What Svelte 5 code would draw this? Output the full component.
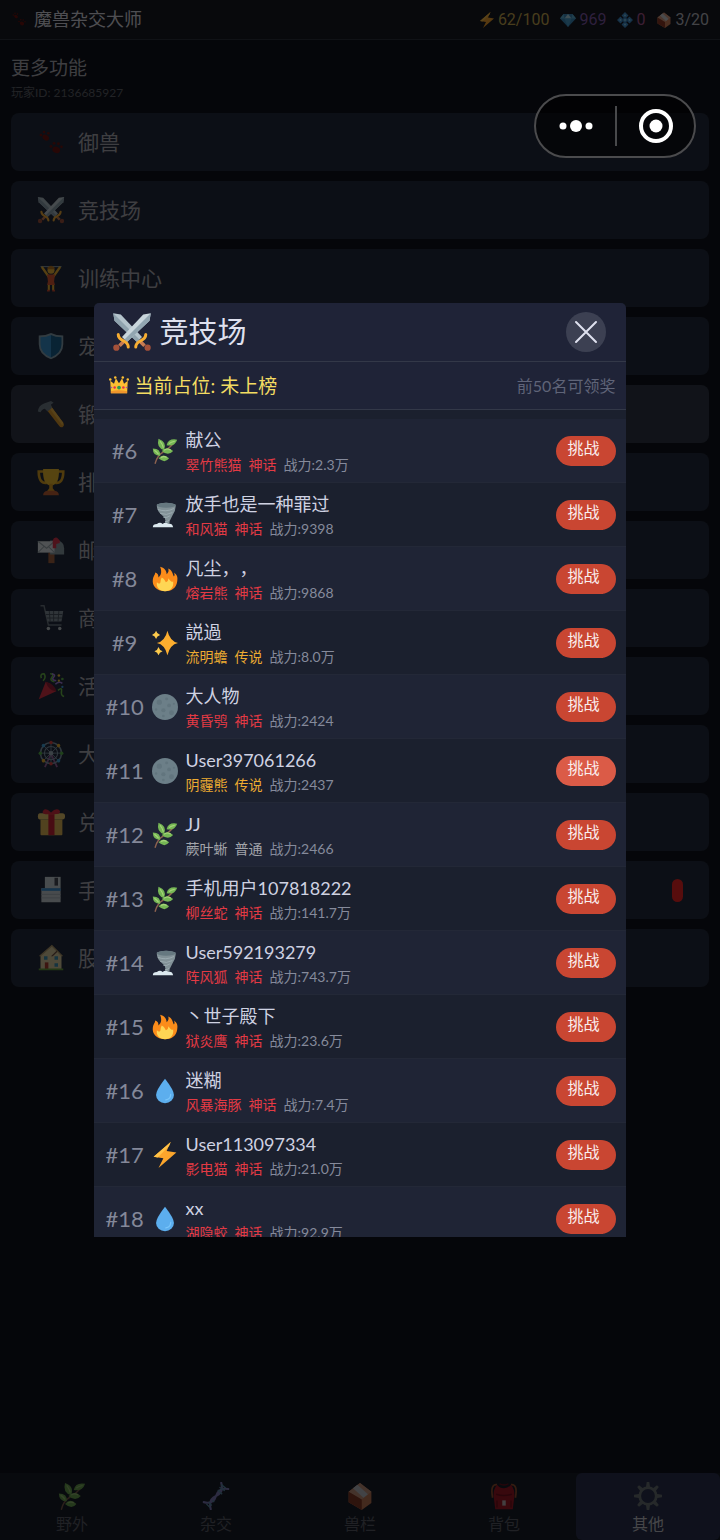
<script>
  const stats = [
    { icon: 'bolt', value: '62/100', tone: 'energy' },
    { icon: 'gem', value: '969', tone: 'gems' },
    { icon: 'bead', value: '0', tone: 'beads' },
    { icon: 'brick', value: '3/20', tone: 'slots' }
  ];

  const features = [
    { icon: 'paw', label: '御兽' },
    { icon: 'swords', label: '竞技场' },
    { icon: 'lifter', label: '训练中心' },
    { icon: 'shield', label: '宠物' },
    { icon: 'hammer', label: '锻造', raised: true },
    { icon: 'trophy', label: '排行' },
    { icon: 'mailbox', label: '邮件' },
    { icon: 'cart', label: '商店' },
    { icon: 'party', label: '活动' },
    { icon: 'wheel', label: '大转盘' },
    { icon: 'gift', label: '兑换' },
    { icon: 'floppy', label: '手动存档', alert: true },
    { icon: 'house', label: '股市' }
  ];

  const players = [
    { rank: 6, icon: 'leaf', name: '献公', pet: '翠竹熊猫', tier: '神话', power: '2.3万' },
    { rank: 7, icon: 'tornado', name: '放手也是一种罪过', pet: '和风猫', tier: '神话', power: '9398' },
    { rank: 8, icon: 'fire', name: '凡尘，，', pet: '熔岩熊', tier: '神话', power: '9868' },
    { rank: 9, icon: 'sparkle', name: '説過', pet: '流明蟾', tier: '传说', power: '8.0万' },
    { rank: 10, icon: 'moon', name: '大人物', pet: '黄昏鸮', tier: '神话', power: '2424' },
    { rank: 11, icon: 'moon', name: 'User397061266', pet: '阴霾熊', tier: '传说', power: '2437', hot: true },
    { rank: 12, icon: 'leaf', name: 'JJ', pet: '蕨叶蜥', tier: '普通', power: '2466' },
    { rank: 13, icon: 'leaf', name: '手机用户107818222', pet: '柳丝蛇', tier: '神话', power: '141.7万' },
    { rank: 14, icon: 'tornado', name: 'User592193279', pet: '阵风狐', tier: '神话', power: '743.7万' },
    { rank: 15, icon: 'fire', name: '丶世子殿下', pet: '狱炎鹰', tier: '神话', power: '23.6万' },
    { rank: 16, icon: 'drop', name: '迷糊', pet: '风暴海豚', tier: '神话', power: '7.4万' },
    { rank: 17, icon: 'bolt', name: 'User113097334', pet: '影电猫', tier: '神话', power: '21.0万' },
    { rank: 18, icon: 'drop', name: 'xx', pet: '湖隐蛟', tier: '神话', power: '92.9万' }
  ];

  const tierClass = { 神话: 'mythic', 传说: 'legend', 普通: 'common' };

  const tabs = [
    { icon: 'leaf', label: '野外' },
    { icon: 'dna', label: '杂交' },
    { icon: 'brick', label: '兽栏' },
    { icon: 'backpack', label: '背包' },
    { icon: 'gear', label: '其他', active: true }
  ];

  const spokes = [0, 45, 90, 135, 180, 225, 270, 315];
  const cabins = ['#e5433d', '#f0b32c', '#58b947', '#3fa7e0', '#e5433d', '#f0b32c', '#58b947', '#3fa7e0'];
</script>

{#snippet icon(name)}
  <svg class="icon" viewBox="0 0 32 32" aria-hidden="true">
    {#if name === 'paw'}
      <g fill="#6e100a">
        <ellipse cx="10" cy="11" rx="4" ry="3" transform="rotate(35 10 11)" />
        <circle cx="4.500" cy="8" r="1.500" /><circle cx="8" cy="4.500" r="1.500" /><circle cx="13" cy="6" r="1.500" />
        <ellipse cx="22" cy="25" rx="4.500" ry="3.500" transform="rotate(20 22 25)" />
        <circle cx="16" cy="21" r="1.600" /><circle cx="19.500" cy="17.500" r="1.600" /><circle cx="24.500" cy="18" r="1.600" /><circle cx="28" cy="21.500" r="1.500" />
      </g>
    {:else if name === 'swords'}
      <path d="M1 1l6 1 17 18-4 4L2 7z" fill="#b4c4cc" />
      <path d="M1 1l21 21-2 2L2 7z" fill="#8fa3ae" />
      <path d="M31 1l-6 1L8 20l4 4L30 7z" fill="#c9d6dc" />
      <path d="M31 1L10 22l2 2L30 7z" fill="#92a6b1" />
      <path d="M5 26l4-4 2 2-4 4zM27 26l-4-4-2 2 4 4z" fill="#c77b52" />
      <path d="M5 18q0 3 4 5t4 5M27 18q0 3-4 5t-4 5" fill="none" stroke="#f6ad32" stroke-width="2.400" stroke-linecap="round" />
      <circle cx="3.500" cy="28.500" r="2.500" fill="#a4513a" /><circle cx="28.500" cy="28.500" r="2.500" fill="#a4513a" />
    {:else if name === 'lifter'}
      <path d="M4 3h24" stroke="#90a4ae" stroke-width="1.200" />
      <path d="M6 4l7 10M26 4l-7 10" stroke="#f5b62e" stroke-width="2.600" stroke-linecap="round" />
      <circle cx="16" cy="7" r="4" fill="#f8bd35" />
      <path d="M12 4q4-4 8 0v2h-8z" fill="#c27a1c" />
      <path d="M11.500 12h9l-1 8 1 4h-9l1-4z" fill="#e0562e" />
      <path d="M13.500 24v6M18.500 24v6" stroke="#f5b62e" stroke-width="2.400" />
      <path d="M11.500 30.500h3M17.500 30.500h3" stroke="#d84a2a" stroke-width="2" />
    {:else if name === 'shield'}
      <path d="M2 4q8 0 14-3 6 3 14 3v10q0 12-14 17Q2 26 2 14z" fill="#8fa9b5" />
      <path d="M4 6q7 0 12-2.500V29Q4 24 4 14z" fill="#3793cf" />
      <path d="M28 6q-7 0-12-2.500V29q12-5 12-15z" fill="#176291" />
    {:else if name === 'hammer'}
      <path d="M11 11l5-4 14 19q2 3-1 5-2 1-4-2z" fill="#e29a24" />
      <path d="M14 9l2-2 14 19-1 3z" fill="#f7b940" />
      <path d="M1 13q1-7 7-9l8-3 3 2-3 2 1 4-5 4-3-3q-3 0-5 4z" fill="#73808a" />
    {:else if name === 'trophy'}
      <path d="M8 4H2q0 14 9 13M24 4h6q0 14-9 13" fill="none" stroke="#e6a91e" stroke-width="3" />
      <path d="M7 1h18q1 18-9 19Q6 19 7 1z" fill="#f6c12b" />
      <path d="M14 18h4v5l3 4H11l3-4z" fill="#e4a11f" />
      <path d="M7 31q0-4 5-5h8q5 1 5 5z" fill="#c7602f" />
    {:else if name === 'mailbox'}
      <path d="M13 19h7v12h-7z" fill="#a5623c" />
      <path d="M15 5h8q8 1 8 9v7H15z" fill="#8fa0a8" />
      <path d="M1 6h19v13H1z" fill="#e6eaec" />
      <path d="M1 6l10 8 9-8M1 19l7-7M20 19l-7-7" fill="none" stroke="#9fabb1" stroke-width="1.200" />
      <path d="M18 14V5q1-4 5-3l3 3v3l-4 1v5z" fill="#e0334a" />
    {:else if name === 'cart'}
      <path d="M4 2h4l5 22h15" fill="none" stroke="#6f7a82" stroke-width="1.600" />
      <path d="M9 8h21l-2 12H12z" fill="#87939b" />
      <path d="M10 12h19M11 16h18M14 8l1 12M19 8v12M25 8l-1 12" stroke="#414a55" stroke-width="1" />
      <circle cx="13" cy="28" r="2" fill="#c5cdd1" /><circle cx="26" cy="28" r="2" fill="#c5cdd1" />
    {:else if name === 'party'}
      <path d="M2 31l8-20q8 3 12 11z" fill="#e22f42" />
      <path d="M10 11q3 10 12 11-1-8-12-11z" fill="#9e1c32" />
      <path d="M5 7q-2-5 3-5 3 4-1 8M15 2q5 0 2 4t3 5M24 21q5-4 4 1t3 6" fill="none" stroke="#6bbf45" stroke-width="1.800" />
      <path d="M17 2q5 1 2 4t3 4M21 14q4-4 8-1" fill="none" stroke="#ab7fe4" stroke-width="1.800" />
      <circle cx="25" cy="4" r="1.500" fill="#f7c733" /><circle cx="29" cy="8" r="1.500" fill="#5eb745" /><circle cx="25" cy="10" r="1.300" fill="#f7c733" /><circle cx="29" cy="17" r="1.300" fill="#46a3e8" />
    {:else if name === 'wheel'}
      <path d="M16 16l-7 15M16 16l7 15" stroke="#9c5f9c" stroke-width="2" />
      <circle cx="16" cy="15" r="12" fill="none" stroke="#869cac" stroke-width="1.600" />
      <circle cx="16" cy="15" r="7.500" fill="none" stroke="#869cac" stroke-width="1.200" />
      {#each spokes as angle, i}
        <g transform="rotate({angle} 16 15)">
          <path d="M16 15V3" stroke="#869cac" stroke-width="1" />
          <circle cx="16" cy="2.800" r="2" fill={cabins[i]} />
        </g>
      {/each}
      <circle cx="16" cy="15" r="2.500" fill="#a7b8c2" />
    {:else if name === 'gift'}
      <path d="M4 13h25v17q0 1-1 1H5q-1 0-1-1z" fill="#e8bd54" />
      <path d="M3 6h26q3 0 3 3v1q0 3-3 3H3q-2 0-2-3V9q0-3 2-3z" fill="#f2cd6b" />
      <path d="M13 7h7v24h-7z" fill="#cf1f30" />
      <path d="M16 7Q4 8 7 3q3-4 9 2 6-6 10-2 2 5-10 4z" fill="#e0293b" />
    {:else if name === 'floppy'}
      <path d="M9 1h18v13H9z" fill="#cfd8dc" /><path d="M20 2h4v9h-4z" fill="#454b54" />
      <path d="M5 14h22v16H5z" fill="#cdd5da" /><path d="M5 14h22v3H5z" fill="#3b93d6" />
      <path d="M5 21h22M5 25h22" stroke="#a9b3b9" stroke-width="1" />
    {:else if name === 'house'}
      <path d="M4 13L17 2l11 11v16H4z" fill="#dfcf9e" />
      <path d="M3 14L17 2l12 12" fill="none" stroke="#b49b6a" stroke-width="1.600" />
      <path d="M16 14l7-7v2l-5 5z" fill="#6c4a3b" />
      <path d="M9 21h4v8H9z" fill="#b03a2b" />
      <path d="M8 14h4v4H8zM20 14h4v4h-4zM20 22h4v4h-4z" fill="#3e93b4" />
      <path d="M2 28h28v2H2z" fill="#669e39" />
    {:else if name === 'crown'}
      <path d="M2 9l6 5 3-9 5 8 5-8 3 9 6-5-1 20H3z" fill="#fdbf32" />
      <path d="M3 26q13-3 26 0v3H3z" fill="#f0952c" />
      <g fill="#fdbf32"><circle cx="2" cy="7" r="2" /><circle cx="10" cy="4" r="2" /><circle cx="22" cy="4" r="2" /><circle cx="30" cy="7" r="2" /></g>
      <circle cx="16" cy="20" r="3" fill="#2d9b4e" /><circle cx="9" cy="20" r="2" fill="#e0324c" /><circle cx="23" cy="20" r="2" fill="#e0324c" /><circle cx="4" cy="20" r="1.200" fill="#9255c5" /><circle cx="28" cy="20" r="1.200" fill="#9255c5" />
    {:else if name === 'leaf'}
      <path d="M4 31Q6 22 14 17T26 7" fill="none" stroke="#8d6250" stroke-width="1.800" stroke-linecap="round" />
      <g fill="#76b755">
        <path d="M31 2Q20 0 18 9q10 2 13-7z" /><path d="M8 1q11 4 7 14Q5 12 8 1z" />
        <path d="M1 13q10 0 9 9-9 0-9-9z" /><path d="M12 16q7-7 14 0-6 7-14 0z" />
        <path d="M8 25q6-7 13 0-5 7-13 0z" />
      </g>
      <g fill="none" stroke="#a9d67c" stroke-width="1.400"><path d="M28 4q-5 1-7 3M10 4q3 4 4 8M15 15q4-3 8 0M11 24q4-2 7 0M3 15q3 2 5 5" /></g>
    {:else if name === 'tornado'}
      <path d="M6 3q11-4 23 0 1 7-4 14-4 6-4 12h-6q4-8-2-12Q5 11 6 3z" fill="#829197" />
      <ellipse cx="17.500" cy="4" rx="11.500" ry="3" fill="#667880" />
      <path d="M7 9q10 4 20-1M10 14q8 3 15-1M14 19q4 1 8-2M16 24q3 1 5-2" fill="none" stroke="#a0afb5" stroke-width="1" />
      <path d="M1 31q0-4 5-4 4-3 7 0 4-3 7 0 5-1 6 4z" fill="#dce9ef" />
    {:else if name === 'fire'}
      <path d="M16 31C5 31 0 24 1 17c0-4 3-6 3-9 3 1 4 3 4 6 4-3 4-8 2-13 5 1 8 5 8 9 2-2 3-4 2-7 5 2 5 6 7 10 1-1 1-3 0-5 4 3 5 6 4 11-1 8-7 12-15 12z" fill="#fb8c1a" />
      <path d="M16 31C9 31 5 26 6 20c2 2 3 2 4 1 1-2 0-4 2-7 3 1 4 4 5 6 3-1 3-3 3-5 3 3 3 5 6 4 1 7-3 12-10 12z" fill="#fed654" />
    {:else if name === 'sparkle'}
      <path d="M19 1q3 13 13 15-10 2-13 15Q16 18 6 16q10-2 13-15z" fill="#fdae2f" />
      <path d="M5 1q1 4 5 5-4 1-5 5-1-4-5-5 4-1 5-5zM8 21q1 4 5 5-4 1-5 5-1-4-5-5 4-1 5-5z" fill="#fdca4c" />
    {:else if name === 'moon'}
      <circle cx="16" cy="16" r="16" fill="#6c7f88" />
      <g fill="#62757e"><circle cx="9" cy="10" r="3.200" /><circle cx="18" cy="6" r="1.800" /><circle cx="21" cy="14" r="2.300" /><circle cx="14" cy="20" r="2.600" /><circle cx="24" cy="23" r="3" /><circle cx="5" cy="19" r="1.500" /><circle cx="14" cy="27" r="1.600" /><circle cx="27" cy="12" r="1.300" /></g>
    {:else if name === 'drop'}
      <path d="M16 1q11 14 11 20a11 10 0 01-22 0Q5 15 16 1z" fill="#5caeee" />
      <path d="M23 20q0 6-6 7" fill="none" stroke="#79c5fa" stroke-width="1.500" stroke-linecap="round" />
    {:else if name === 'bolt'}
      <path d="M23 0L2 18l12 2-6 12 22-19-12-2z" fill="#fba52c" />
      <path d="M23 0L2 18l5 1L21 5z" fill="#ffc247" />
    {:else if name === 'gem'}
      <path d="M7 4h18l7 9-16 17L0 13z" fill="#3b8ec2" /><path d="M7 4L0 13h9zM25 4l7 9h-9z" fill="#5fb6dc" />
      <path d="M9 13l7-9 7 9z" fill="#b5e1f2" /><path d="M9 13h14l-7 17z" fill="#4ca5d5" />
    {:else if name === 'bead'}
      <path d="M16 0l7 7-7 7-7-7zM16 18l7 7-7 7-7-7zM0 16l7-7 7 7-7 7zM18 16l7-7 7 7-7 7z" fill="#3f91d0" />
      <path d="M16 9l7 7-7 7-7-7z" fill="#2f76b4" />
      <circle cx="16" cy="16" r="3" fill="#71c1e8" />
      <g fill="#86cff2"><circle cx="16" cy="7" r="2" /><circle cx="16" cy="25" r="2" /><circle cx="7" cy="16" r="2" /><circle cx="25" cy="16" r="2" /></g>
    {:else if name === 'brick'}
      <path d="M3 11L16 1l13 10v13L18 32 3 23z" fill="#d9855a" />
      <path d="M3 11L16 1l13 10-11 9z" fill="#dda285" /><path d="M8 7l5-4 12 11-5 4z" fill="#d5d8de" />
      <path d="M3 11l15 9v12L3 23z" fill="#923a22" />
    {:else if name === 'dna'}
      <path d="M2 23q11 3 14-7T30 8M10 31Q7 20 16 16T22 1" fill="none" stroke="#8d86cd" stroke-width="2.400" stroke-linecap="round" />
      <path d="M5 25l4 4M8 23l3 4M12 21l2 2M18 9l5 5M20 6l6 4M22 3l5 4" stroke="#5f9fb7" stroke-width="1.600" />
    {:else if name === 'backpack'}
      <path d="M8 3Q0 2 3 18M24 3q8-1 5 15" fill="none" stroke="#a6572f" stroke-width="2" />
      <path d="M8 3q3 4 8 4t8-4q4 5 4 12l-2 16H6L4 15Q4 8 8 3z" fill="#b51220" />
      <path d="M11 2q5 3 10 0M7 14q9 3 18 0M8 21v8M24 21v8" fill="none" stroke="#7f0a17" stroke-width="1.600" />
      <path d="M14 21h4v6h-4z" fill="#d9cccc" />
    {:else if name === 'gear'}
      <g fill="#737a76">
        {#each spokes as angle}
          <path d="M13.500 7l1-7h3l1 7z" transform="rotate({angle} 16 16)" />
        {/each}
      </g>
      <circle cx="16" cy="16" r="9.500" fill="none" stroke="#737a76" stroke-width="3.200" />
    {/if}
  </svg>
{/snippet}

<div class="page">
  <header class="topbar">
    <span class="brand">{@render icon('paw')}<span>魔兽杂交大师</span></span>
    <div class="stats">
      {#each stats as stat}
        <span class="stat {stat.tone}">{@render icon(stat.icon)}<span>{stat.value}</span></span>
      {/each}
    </div>
  </header>

  <main>
    <h1>更多功能</h1>
    <p class="player-id">玩家ID: 2136685927</p>
    <div class="features">
      {#each features as item}
        <button class="feature" class:raised={item.raised}>
          {@render icon(item.icon)}
          <span>{item.label}</span>
          {#if item.alert}<i class="alert"></i>{/if}
        </button>
      {/each}
    </div>
  </main>

  <nav>
    {#each tabs as tab}
      <button class="tab" class:active={tab.active}>
        {@render icon(tab.icon)}
        <span>{tab.label}</span>
      </button>
    {/each}
  </nav>
</div>

<div class="backdrop">
  <section class="modal" role="dialog" aria-labelledby="arena-title">
    <header class="modal-head">
      {@render icon('swords')}
      <h2 id="arena-title">竞技场</h2>
      <button class="close" aria-label="关闭">
        <svg viewBox="0 0 24 24" aria-hidden="true"><path d="M2 2l20 20M22 2L2 22" /></svg>
      </button>
    </header>
    <div class="standing">
      {@render icon('crown')}
      <strong>当前占位: 未上榜</strong>
      <span>前50名可领奖</span>
    </div>
    <ul class="ranking">
      {#each players as player}
        <li>
          <span class="rank">#{player.rank}</span>
          {@render icon(player.icon)}
          <div class="info">
            <div class="name">{player.name}</div>
            <div class="detail">
              <span class={tierClass[player.tier]}>{player.pet}</span>
              <span class={tierClass[player.tier]}>{player.tier}</span>
              <span>战力:{player.power}</span>
            </div>
          </div>
          <button class="challenge" class:hot={player.hot}>挑战</button>
        </li>
      {/each}
    </ul>
  </section>
</div>

<div class="capsule">
  <button aria-label="更多">
    <svg viewBox="0 0 36 16" width="36" height="16" aria-hidden="true"><circle cx="5" cy="8" r="3.500" /><circle cx="18" cy="8" r="6" /><circle cx="31" cy="8" r="3.500" /></svg>
  </button>
  <button aria-label="退出">
    <svg viewBox="0 0 36 36" width="36" height="36" aria-hidden="true"><circle cx="18" cy="18" r="15" fill="none" stroke="#fff" stroke-width="4" /><circle cx="18" cy="18" r="6.500" /></svg>
  </button>
</div>

<style>
  :global(body) {
    background: #0d111a;
    font-family: Lato, 'Noto Sans CJK SC', sans-serif;
    text-spacing-trim: space-all;
  }

  h1, h2, p, ul { margin: 0; padding: 0; font-weight: 400; }
  button { border: 0; padding: 0; font: inherit; color: inherit; background: none; }
  .icon { display: block; flex: none; width: 28px; height: 28px; }

  .page {
    display: flex;
    flex-direction: column;
    min-height: 100vh;
    color: #c4c4cc;
  }
  .page .icon { opacity: 0.85; }

  .topbar {
    box-sizing: border-box;
    display: flex;
    align-items: center;
    justify-content: space-between;
    height: 40px;
    padding: 0 11px;
    background: #14171f;
    border-bottom: 1px solid #292d38;
  }
  .brand { display: flex; align-items: center; gap: 7px; font-size: 18px; line-height: 24px; padding-bottom: 1px; }
  .stats { display: flex; gap: 11px; font-family: Roboto, sans-serif; font-size: 16px; }
  .stat { display: flex; align-items: center; gap: 3px; }
  .topbar .icon { width: 16px; height: 16px; }
  .energy { color: #b59a49; }
  .gems { color: #735099; }
  .beads { color: #984d83; }
  .slots { color: #a7a8b0; }

  main { flex: 1; padding: 14px 11px; }
  h1 { font-size: 19px; line-height: 28px; color: #9c9ca4; }
  .player-id { font-size: 12px; line-height: 22px; color: #55575f; }

  .features { display: grid; gap: 10px; margin-top: 9px; }
  .feature {
    box-sizing: border-box;
    display: flex;
    align-items: center;
    gap: 13px;
    height: 58px;
    padding: 0 26px;
    border-radius: 8px;
    background: #202737;
    font-size: 21px;
    color: #9c9ca4;
  }
  .feature span { padding-bottom: 3px; }
  .feature.raised { background: #2c313f; }
  .alert { width: 11px; height: 23px; margin-left: auto; border-radius: 6px; background: #d92222; }

  nav {
    display: grid;
    grid-template-columns: repeat(5, 1fr);
    height: 67px;
    background: #161a24;
  }
  .tab {
    display: flex;
    flex-direction: column;
    align-items: center;
    padding-top: 9px;
    gap: 2px;
    border-radius: 6px;
    font-size: 16px;
    line-height: 24px;
    color: #50535c;
  }
  .tab .icon { opacity: 0.75; }
  .tab.active { background: #262c46; color: #aeb0b7; }

  .backdrop {
    position: fixed;
    inset: 0;
    display: grid;
    place-items: center;
    background: rgba(0, 0, 0, 0.6);
  }

  .modal {
    display: flex;
    flex-direction: column;
    width: 74%;
    max-height: 934px;
    overflow: hidden;
    border-radius: 5px 5px 0 0;
    background: #1f2337;
    color: #dfe1ef;
  }
  .modal-head {
    display: flex;
    flex: none;
    align-items: center;
    gap: 8px;
    height: 58px;
    padding: 0 20px 0 18px;
    border-bottom: 1px solid #333848;
  }
  .modal-head .icon { width: 40px; height: 40px; }
  h2 { font-size: 29px; line-height: 40px; }
  .close {
    display: grid;
    place-items: center;
    width: 40px;
    height: 40px;
    margin-left: auto;
    border-radius: 50%;
    background: #3c4052;
  }
  .close svg { width: 24px; height: 24px; fill: none; stroke: #dfe1ef; stroke-width: 2; stroke-linecap: round; }

  .standing {
    display: flex;
    flex: none;
    align-items: center;
    height: 45px;
    padding: 0 11px 2px 15px;
    gap: 6px;
    border-bottom: 1px solid #333848;
  }
  .standing .icon { width: 20px; height: 20px; }
  .standing strong { font-size: 19px; font-weight: 400; color: #f3dc62; }
  .standing span { margin-left: auto; font-size: 16px; color: #5f6478; }

  .ranking {
    flex: 1;
    min-height: 0;
    padding-top: 9px;
    overflow-y: auto;
    scrollbar-width: none;
    list-style: none;
    background: #1b202e;
  }
  li {
    box-sizing: border-box;
    display: flex;
    align-items: center;
    height: 64px;
    padding: 0 10px 0 12px;
    border-bottom: 1px solid #232837;
  }
  li:nth-child(odd) { background: #1f2435; }
  .rank { display: flex; justify-content: center; width: 38px; font-size: 22px; color: #848899; }
  li .icon { width: 26px; height: 26px; margin: 0 8px; }
  .info { flex: 1; min-width: 0; padding-top: 2px; }
  .name { font-size: 18px; line-height: 26px; color: #cfd2e2; }
  .detail { display: flex; gap: 7px; font-size: 14px; line-height: 24px; color: #858a9b; }
  .mythic { color: #e33a44; }
  .legend { color: #edab31; }
  .common { color: #a3a5ab; }

  .challenge {
    width: 60px;
    height: 30px;
    padding: 0 6px 6px 0;
    border-radius: 15px;
    background: #c94632;
    color: #faeeee;
    font-size: 16px;
    line-height: 24px;
  }
  .challenge.hot { background: #db5b47; }

  .capsule {
    position: fixed;
    top: 94px;
    right: 24px;
    box-sizing: border-box;
    display: grid;
    grid-template-columns: 79px 1fr;
    align-items: center;
    width: 162px;
    height: 64px;
    border: 2px solid #4b4b4d;
    border-radius: 32px;
    background: rgba(0, 0, 0, 0.6);
  }
  .capsule button { display: grid; place-items: center; height: 40px; }
  .capsule button + button { border-left: 2px solid #48494b; }
  .capsule svg { fill: #fff; }
</style>
